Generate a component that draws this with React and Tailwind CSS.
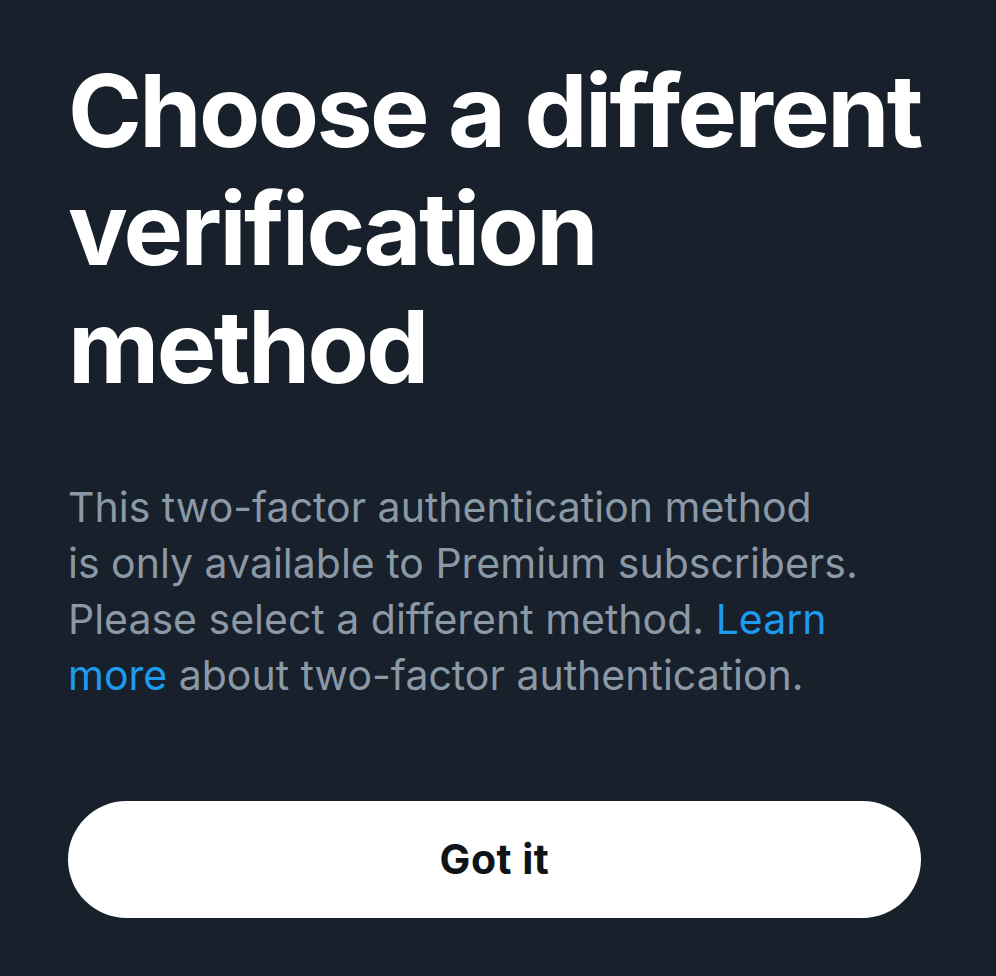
import React from "react";

const App = () => {
  return (
    <div
      className="min-h-screen w-full bg-[#17202b] px-[68px] pt-[52px] pb-[58px]"
      style={{ fontFamily: "Inter, 'Noto Sans', sans-serif" }}
    >
      <div className="w-[853px]">
        <h1 className="whitespace-nowrap text-[100px] font-bold leading-[118px] tracking-[-2.6px] text-white">
          Choose a different
          <br />
          verification
          <br />
          method
        </h1>

        <p className="mt-[73px] whitespace-nowrap text-[41px] leading-[56px] text-[#8b98a5]">
          This two-factor authentication method
          <br />
          is only available to Premium subscribers.
          <br />
          Please select a different method.{" "}
          <a href="#" className="text-[#1d9bf0]">
            Learn
            <br />
            more
          </a>{" "}
          about two-factor authentication.
        </p>

        <button
          type="button"
          className="mt-[98px] flex h-[117px] w-full items-center justify-center rounded-full bg-white text-[41px] font-bold tracking-[0.5px] text-[#0f1419]"
        >
          Got it
        </button>
      </div>
    </div>
  );
};

export default App;
